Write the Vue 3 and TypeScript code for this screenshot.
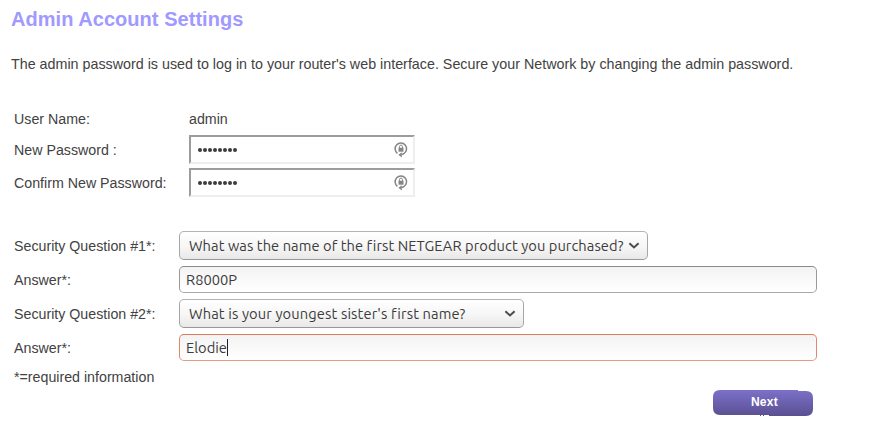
<script setup lang="ts">
import { ref } from 'vue'

interface PasswordField {
  label: string
  value: string
}

interface SecurityField {
  question: string
  choice: string
  size: 'wide' | 'narrow'
  answer: string
  focused: boolean
}

const passwords = ref<PasswordField[]>([
  { label: 'New Password :', value: '••••••••' },
  { label: 'Confirm New Password:', value: '••••••••' },
])

const questions = ref<SecurityField[]>([
  {
    question: 'Security Question #1*:',
    choice: 'What was the name of the first NETGEAR product you purchased?',
    size: 'wide',
    answer: 'R8000P',
    focused: false,
  },
  {
    question: 'Security Question #2*:',
    choice: "What is your youngest sister's first name?",
    size: 'narrow',
    answer: 'Elodie',
    focused: true,
  },
])
</script>

<template>
  <main class="page">
    <h1 class="title">Admin Account Settings</h1>
    <p class="intro">The admin password is used to log in to your router's web interface. Secure your Network by changing the admin password.</p>

    <section class="account">
      <div class="row user">
        <span class="label">User Name:</span>
        <span>admin</span>
      </div>
      <div v-for="field in passwords" :key="field.label" class="row">
        <span class="label">{{ field.label }}</span>
        <div class="password">
          <span class="dots"><i v-for="(_, i) in field.value" :key="i" class="dot"></i></span>
          <svg class="lock" width="14" height="17" viewBox="0 0 14 17">
            <path d="M3.4 12.3A5.7 5.7 0 1 1 10 12.5L8 13.6" fill="none" stroke="#858585" stroke-width="1.5" />
            <path d="M7.8 11.2V16.4L4.4 13.8Z" fill="#858585" />
            <path d="M5.5 7V5.6a1.5 1.5 0 0 1 3 0V7" fill="none" stroke="#8c8c8c" stroke-width="1" />
            <rect x="4.5" y="6.7" width="5" height="4" fill="#858585" />
          </svg>
        </div>
      </div>
    </section>

    <section class="security">
      <template v-for="item in questions" :key="item.question">
        <div class="row">
          <span class="label">{{ item.question }}</span>
          <div class="select" :class="item.size">
            <span class="choice">{{ item.choice }}</span>
            <svg class="chevron" width="12" height="8" viewBox="0 0 12 8">
              <path d="M1.4 1.2L6 5.5L10.6 1.2" fill="none" stroke="#4c4c4c" stroke-width="2" />
            </svg>
          </div>
        </div>
        <div class="row">
          <span class="label">Answer*:</span>
          <div class="answer" :class="{ focused: item.focused }">
            <span>{{ item.answer }}</span><i v-if="item.focused" class="caret"></i>
          </div>
        </div>
      </template>
    </section>

    <p class="required">*=required information</p>
    <div class="actions">
      <button class="next" type="button">
        <svg class="plate" width="100" height="26" viewBox="0 0 100 26">
          <defs>
            <linearGradient id="plate-fill" x1="0" y1="0" x2="0" y2="1">
              <stop offset="0" stop-color="#7c70ca" />
              <stop offset="1" stop-color="#5a5090" />
            </linearGradient>
          </defs>
          <path d="M7 0H85V1H93Q100 1 100 8V19Q100 26 93 26H56V25H51V26H50V25H48V26H47V25H7Q0 25 0 18V7Q0 0 7 0Z" fill="url(#plate-fill)" />
        </svg>
        <span class="caption">Next</span>
      </button>
    </div>
  </main>
</template>

<style>
body {
  background: #fff;
}
</style>

<style scoped>
.page {
  box-sizing: border-box;
  width: 887px;
  height: 442px;
  padding: 8px 0 0 11px;
  overflow: hidden;
  color: #424242;
  font: 14.22px/20px 'Liberation Sans', Arial, sans-serif;
}

.title {
  margin: 0;
  color: #a099ff;
  font-size: 20px;
  font-weight: bold;
  letter-spacing: 0.04px;
  line-height: 23px;
}

.intro {
  margin: 23px 0 0;
  font-size: 14.31px;
  line-height: 20px;
  white-space: nowrap;
}

.account {
  display: flex;
  flex-direction: column;
  gap: 4px;
  padding: 35px 0 0 3px;
}

.row {
  display: flex;
  align-items: center;
}

.account .label {
  width: 175px;
}

.user {
  height: 22px;
  line-height: 20px;
  align-items: flex-start;
}

.password {
  box-sizing: border-box;
  display: flex;
  align-items: center;
  justify-content: space-between;
  width: 226px;
  height: 29px;
  padding: 0 5px 0 7px;
  border: 2px solid;
  border-color: #9c9c9c #eee #eee #9c9c9c;
}

.dots {
  display: flex;
  gap: 1px;
}

.dot {
  width: 4px;
  height: 4px;
  border-radius: 2px;
  background: #3c3c3c;
}

.security {
  display: flex;
  flex-direction: column;
  gap: 6px;
  padding: 34px 0 0 3px;
}

.security .label {
  width: 165px;
}

.select,
.answer {
  box-sizing: border-box;
  display: flex;
  align-items: center;
  border: 1px solid #a6a6a6;
  border-radius: 5px;
  color: #3c3c3c;
  font-family: Ubuntu, 'Noto Sans', sans-serif;
  font-size: 14.67px;
  white-space: nowrap;
}

.select {
  justify-content: space-between;
  height: 29px;
  padding: 0 7px 0 9px;
  border-color: #b4b4b4 #a6a6a6 #989898;
  background: linear-gradient(#fff, #f7f6f6 55%, #e9e8e7);
}

.select.wide {
  width: 469px;
  letter-spacing: 0.07px;
}

.select.narrow {
  width: 345px;
  letter-spacing: 0.13px;
}

.chevron {
  flex: none;
}

.answer {
  width: 638px;
  height: 27px;
  padding: 0 6px;
  border-color: #8b8b8b #999 #aaa;
  background: linear-gradient(#f3f3f3, #fff);
}

.answer.focused {
  border-color: #dd7c59 #e28866 #e79b80;
}

.caret {
  width: 1px;
  height: 17px;
  background: #222;
}

.required {
  margin: 6px 0 0 3px;
  line-height: 20px;
}

.actions {
  display: flex;
  justify-content: flex-end;
  margin-top: 3px;
  padding-right: 74px;
}

.next {
  display: grid;
  width: 100px;
  height: 26px;
  padding: 0;
  border: 0;
  background: none;
  color: #fff;
  font: bold 12px/24px 'Liberation Sans', Arial, sans-serif;
  letter-spacing: 0.3px;
}

.plate,
.caption {
  grid-area: 1 / 1;
}

.caption {
  padding-left: 3px;
}
</style>
